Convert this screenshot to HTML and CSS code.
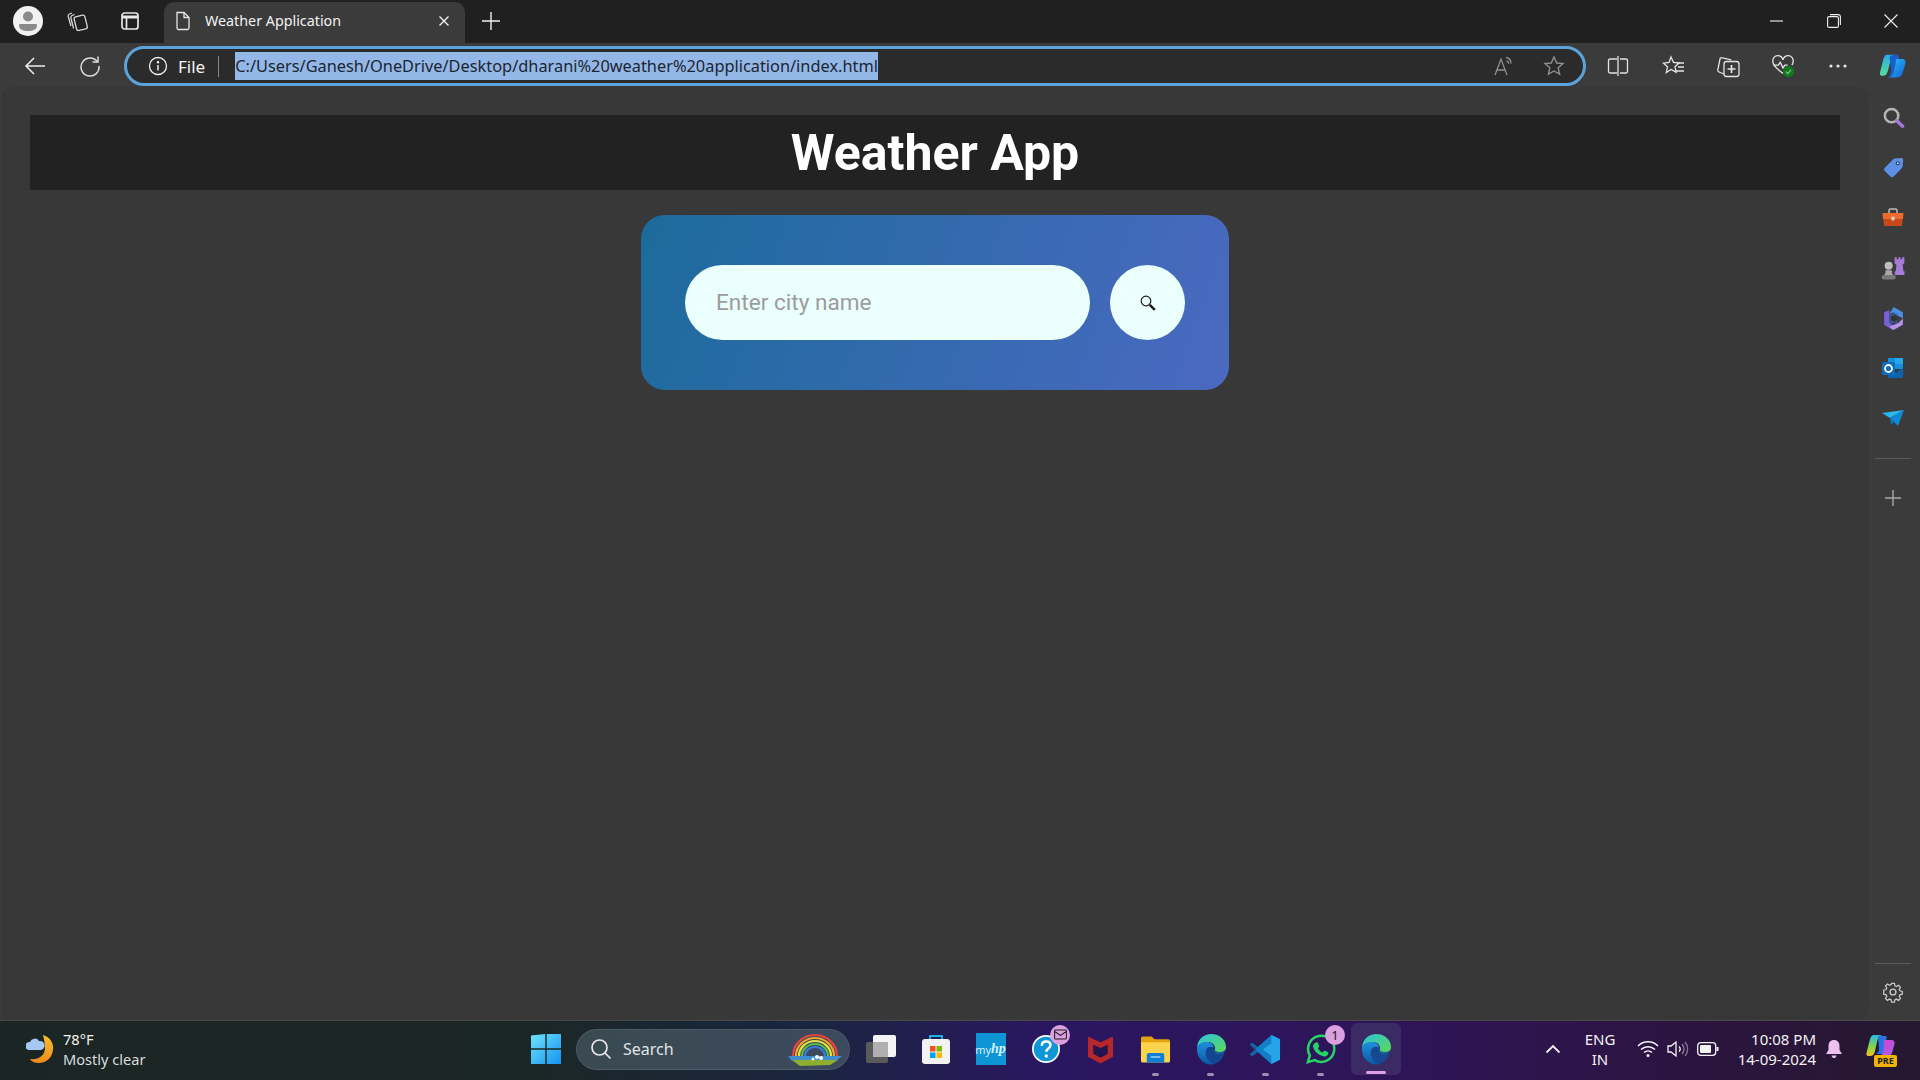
FILE: index.html
```html
<!DOCTYPE html>
<html lang="en">
<head>
  <meta charset="UTF-8" />
  <title>Weather Application</title>
  <link rel="stylesheet" href="styles.css">
</head>
<body>
  <svg class="defs" width="0" height="0">
    <defs>
      <linearGradient id="edgeA" x1="0" y1="0" x2="1" y2="1"><stop offset="0" stop-color="#2bc4e0"/><stop offset="1" stop-color="#5fd84f"/></linearGradient>
      <linearGradient id="edgeB" x1="0" y1="0" x2="0" y2="1"><stop offset="0" stop-color="#1f8fe0"/><stop offset="1" stop-color="#0c59a4"/></linearGradient>
      <linearGradient id="copilot" x1="0" y1="0" x2="1" y2="1"><stop offset="0" stop-color="#35c8e8"/><stop offset=".5" stop-color="#1a8fe8"/><stop offset="1" stop-color="#1463d8"/></linearGradient>
      <linearGradient id="copilotGreen" x1="0" y1="0" x2="0" y2="1"><stop offset="0" stop-color="#2aa8e8"/><stop offset="1" stop-color="#58dc9a"/></linearGradient>
      <linearGradient id="winLogo" x1="0" y1="0" x2="1" y2="1"><stop offset="0" stop-color="#6ee4fa"/><stop offset="1" stop-color="#1492f0"/></linearGradient>
      <linearGradient id="moon" x1="0" y1="0" x2="0" y2="1"><stop offset="0" stop-color="#fbc02d"/><stop offset="1" stop-color="#ef8a1c"/></linearGradient>
      <linearGradient id="prePink" x1="0" y1="0" x2="1" y2="1"><stop offset="0" stop-color="#e040c8"/><stop offset="1" stop-color="#a060f0"/></linearGradient>
      <linearGradient id="preGreen" x1="0" y1="0" x2="0" y2="1"><stop offset="0" stop-color="#28b8e8"/><stop offset=".6" stop-color="#8cd83c"/><stop offset="1" stop-color="#f0c020"/></linearGradient>
      <symbol id="edge" viewBox="0 0 32 32">
        <path fill="url(#edgeA)" d="M2 14C3 6 9 1 16 1c9 0 15 6 15 13 0 4-3 7-7 7-3 0-5-1-5-3 0-1 1-1 1-3 0-3-3-6-7-6-5 0-9 2-11 5z"/>
        <path fill="url(#edgeB)" d="M2 14c2-4 6-5 10-5 4 0 7 3 7 6-3-2-7-1-8 3-1 5 3 11 9 13-1 .3-3 .5-4 .5C8 31.500 1 24 2 14z"/>
        <path fill="#0f4f9a" d="M11 18c1-4 5-5 8-3 0 2 2 4 6 4 2 0 4-1 5-2-1 8-6 14-13 14-4-2-7-8-6-13z" opacity=".85"/>
      </symbol>
      <symbol id="copilotMark" viewBox="0 0 32 32">
        <path fill="url(#copilotGreen)" d="M9 3h9c-3 1-4 4-5 8l-3 11c-1 3-2 5-5 5H3c-2 0-2-2-2-3l4-16c1-3 2-5 4-5z"/>
        <path fill="#1a5fc8" d="M12 6c1-2 3-3 5-3h3c2 0 3 2 3 4l-6 19c-1 2-2 3-4 3h-3c3-2 3-4 4-8z"/>
        <path fill="url(#copilot)" d="M20 8h7c3 0 4 3 3 6l-3 10c-1 3-3 5-6 5h-9c3-1 4-3 5-7l2-9c0-2 .5-4 1-5z"/>
      </symbol>
    </defs>
  </svg>

  <div class="tabstrip">
    <div class="tabstrip-left">
      <div class="avatar">
        <svg viewBox="0 0 30 30" width="30" height="30"><circle cx="15" cy="15" r="15" fill="#f2f2f2"/><circle cx="15" cy="10.500" r="5" fill="#8a8a8a"/><path fill="#8a8a8a" d="M7 18h16c1 0 1 1 1 2 0 3-4 5-9 5s-9-2-9-5c0-1 0-2 1-2z"/></svg>
      </div>
      <span class="strip-btn">
        <svg viewBox="0 0 24 24" width="24" height="24" fill="none" stroke="#d8d8d8" stroke-width="1.300"><rect x="10" y="7" width="11" height="14" rx="2" transform="rotate(-14 15 13)"/><path d="M9.500 5.500 7 6.500c-1 .5-1.400 1.300-1.100 2.500l2.700 10.500"/><path d="M7 4 4.500 5C3.300 5.500 3 6.500 3.200 7.500L6 17"/></svg>
      </span>
      <span class="strip-btn tabs-btn">
        <svg viewBox="0 0 20 20" width="20" height="20" fill="none" stroke="#e8e8e8" stroke-width="1.700"><rect x="2" y="2" width="16" height="16" rx="2.500"/><path d="M2 6h16" stroke-width="3"/><path d="M6.500 6v12"/></svg>
      </span>
    </div>
    <div class="tab">
      <svg viewBox="0 0 18 22" width="18" height="22" fill="none" stroke="#e6e6e6" stroke-width="1.300"><path d="M3 2.500h7l5 5V18a1.500 1.500 0 0 1-1.500 1.500h-9A1.500 1.500 0 0 1 3 18z"/><path d="M10 2.500V7.500h5"/></svg>
      <span class="tab-title">Weather Application</span>
      <svg class="tab-close" viewBox="0 0 12 12" width="12" height="12" stroke="#f0f0f0" stroke-width="1.400"><path d="M1.500 1.500l9 9M10.500 1.500l-9 9"/></svg>
    </div>
    <span class="new-tab">
      <svg viewBox="0 0 18 18" width="18" height="18" stroke="#f0f0f0" stroke-width="1.400"><path d="M9 0v18M0 9h18"/></svg>
    </span>
    <div class="window-controls">
      <span class="win-btn"><svg viewBox="0 0 14 14" width="14" height="14" stroke="#f0f0f0" stroke-width="1.100"><path d="M0 7h13"/></svg></span>
      <span class="win-btn"><svg viewBox="0 0 14 14" width="14" height="14" fill="none" stroke="#f0f0f0" stroke-width="1.100"><rect x=".6" y="2.600" width="10.800" height="10.800" rx="1.500"/><path d="M3 .6h8.500A2 2 0 0 1 13.400 2.500V11"/></svg></span>
      <span class="win-btn"><svg viewBox="0 0 14 14" width="14" height="14" stroke="#f0f0f0" stroke-width="1.100"><path d="M.5.500l13 13M13.500.500l-13 13"/></svg></span>
    </div>
  </div>

  <div class="toolbar">
    <span class="tool-btn back-btn"><svg viewBox="0 0 22 20" width="22" height="20" fill="none" stroke="#eee" stroke-width="1.500"><path d="M21 10H2M10 2l-8 8 8 8"/></svg></span>
    <span class="tool-btn reload-btn"><svg viewBox="0 0 22 22" width="22" height="22" fill="none" stroke="#ddd" stroke-width="1.500"><path d="M18.500 7A9 9 0 1 0 20 11"/><path d="M19 1.500V7h-5.500"/></svg></span>
    <div class="address-bar">
      <svg viewBox="0 0 20 20" width="20" height="20" fill="none" stroke="#eee" stroke-width="1.300"><circle cx="10" cy="10" r="8.500"/><path d="M10 9v5.500" stroke-width="1.500"/><circle cx="10" cy="6.200" r=".6" fill="#eee"/></svg>
      <span class="scheme">File</span>
      <span class="scheme-sep"></span>
      <span class="url">C:/Users/Ganesh/OneDrive/Desktop/dharani%20weather%20application/index.html</span>
      <span class="address-icons">
        <svg viewBox="0 0 22 22" width="22" height="22" fill="none" stroke="#8f8f8f" stroke-width="1.300"><path d="M2 20 8 4l6 16M4 15h8"/><path d="M13 2.500c3 .5 5 3 5 6M13.500 6c1.500.3 2.200 1.300 2.300 2.700"/></svg>
        <svg viewBox="0 0 22 22" width="22" height="22" fill="none" stroke="#8f8f8f" stroke-width="1.400"><path d="M11 2l2.700 6 6.300.6-4.800 4.200 1.400 6.400L11 16l-5.600 3.200 1.400-6.400L2 8.600 8.300 8z"/></svg>
      </span>
    </div>
    <div class="toolbar-icons">
      <span class="tool-icon"><svg viewBox="0 0 22 22" width="22" height="22" fill="none" stroke="#e4e4e4" stroke-width="1.300"><path d="M10 4H3a1.500 1.500 0 0 0-1.500 1.500v11A1.500 1.500 0 0 0 3 18h7M13 4h6a1.500 1.500 0 0 1 1.500 1.500v11A1.500 1.500 0 0 1 19 18h-6"/><path d="M11 1v20"/></svg></span>
      <span class="tool-icon"><svg viewBox="0 0 24 22" width="24" height="22" fill="none" stroke="#e4e4e4" stroke-width="1.300"><path d="M10 2l2.500 5.500 5.500.6-4 3.700 1.200 5.400L10 14.500l-4.700 3 1.200-5.700-4-3.600 5.500-.7z"/><path d="M16 8h7M17 12h6M15 16h8"/></svg></span>
      <span class="tool-icon"><svg viewBox="0 0 24 24" width="24" height="24" fill="none" stroke="#e4e4e4" stroke-width="1.300"><rect x="8" y="7.500" width="15" height="15" rx="2.500"/><path d="M15.500 11v8M11.500 15h8" stroke-width="1.700"/><path d="M8 20 3 18c-1-.4-1.500-1.200-1.200-2.200L4 5c.3-1 1.300-1.500 2.300-1.200l9 2"/></svg></span>
      <span class="tool-icon"><svg viewBox="0 0 26 26" width="24" height="24" fill="none" stroke="#e4e4e4" stroke-width="1.400"><path d="M13 21C5 15 2 12 2 8a5.500 5.500 0 0 1 11-1.500A5.500 5.500 0 0 1 24 8c0 1.500-.5 3-1.500 4"/><path d="M2.500 12H8l2-3 3 6 2-3h3"/><circle cx="19" cy="19" r="6" fill="#127a1c" stroke="none"/><path d="M16.300 19.200l2 2 3.400-4" stroke="#7fc987" stroke-width="1.200"/></svg></span>
      <span class="tool-icon"><svg viewBox="0 0 20 6" width="20" height="6" fill="#e8e8e8"><circle cx="3" cy="3" r="1.600"/><circle cx="10" cy="3" r="1.600"/><circle cx="17" cy="3" r="1.600"/></svg></span>
      <span class="tool-icon"><svg width="32" height="28"><use href="#copilotMark"/></svg></span>
    </div>
  </div>

  <div class="main">
    <div class="viewport">
      <header class="app-header"><h1>Weather App</h1></header>
      <div class="search-card">
        <input class="city-input" type="text" placeholder="Enter city name">
        <button class="search-btn" type="button" aria-label="Search">
          <svg viewBox="0 0 18 18" width="18" height="18" fill="none" stroke="#1c1c1c"><circle cx="7" cy="7" r="4.800" stroke-width="1.200"/><path d="M10.800 10.800l5 5" stroke-width="2.600"/></svg>
        </button>
      </div>
    </div>
    <aside class="sidebar">
      <span class="side-icon"><svg viewBox="0 1 24 24" width="23" height="23" fill="none"><circle cx="10" cy="10" r="7" stroke="#b5b5b5" stroke-width="2.600"/><path d="M15.500 15.500l6 5.500" stroke="#a678d8" stroke-width="3.600" stroke-linecap="round"/></svg></span>
      <span class="side-icon"><svg viewBox="0 0 24 24" width="24" height="24"><path fill="#5d8fe6" d="M12 3.500c.6-.6 1.200-.9 2-.9l6.500-.6c1 0 1.800.8 1.700 1.800l-.6 6.700c-.1.800-.4 1.400-1 2l-8 8c-1 1-2.300 1-3.200 0l-5.600-5.500c-1-1-1-2.300 0-3.200z"/><circle cx="16.800" cy="7.200" r="2" fill="#1f3763"/><circle cx="16.800" cy="7.200" r="1" fill="#cfe0ff"/></svg></span>
      <span class="side-icon"><svg viewBox="0 0 24 24" width="24" height="24"><path fill="none" stroke="#bdbdbd" stroke-width="1.500" d="M8 7V4.500C8 3.500 8.500 3 9.500 3h5c1 0 1.500.5 1.500 1.500V7"/><path fill="#ec6a2c" d="M2.500 7h19c.6 0 1 .4 1 1l-.6 5H2.100l-.6-5c0-.6.4-1 1-1z"/><path fill="#c9481a" d="M2.300 13h19.400l-.7 6c-.1.600-.5 1-1.100 1H4c-.6 0-1-.4-1.100-1z"/><rect x="10.300" y="10.500" width="3.400" height="4" rx="1" fill="#d8c8b8"/></svg></span>
      <span class="side-icon"><svg viewBox="0 0 24 24" width="26" height="26"><path fill="#a77bd8" d="M14.500 3h2v2h1.500V3h2v2h1.500V3h2v5.500l-1.500 1.500.6 6h1v3.500h-9V16h1l.6-6-1.700-1.500z" transform="translate(-1 -1)"/><circle cx="8" cy="10" r="3.700" fill="#bdbdbd"/><path fill="#a8a8a8" d="M5 14h6v2.500l1 2H4l1-2z"/><rect x="1.500" y="18.500" width="13" height="4" rx="2" fill="#7a7a7a"/></svg></span>
      <span class="side-icon"><svg viewBox="0 0 24 24" width="25" height="25"><path fill="#4a8fe0" d="M12 1l9 5v6l-5-3-4-3-4 2z"/><path fill="#7a5fd8" d="M3 6l5-2 0 12 4 3-1 4-8-5z"/><path fill="#b794e8" d="M21 12v6l-9 5-4-3 9-4z"/><path fill="#3a6fd0" d="M8 8l8-2v10l-8 1z" opacity=".55"/><path fill="#343434" d="M9.500 10l4-1.500 2.500 2v3l-3.500 1.500-3-1.500z"/></svg></span>
      <span class="side-icon"><svg viewBox="0 0 24 24" width="24" height="24"><path fill="#1490df" d="M7 2h14c.6 0 1 .4 1 1v10H7z"/><path fill="#28a8ea" d="M14 2h7c.6 0 1 .4 1 1v5h-8z"/><path fill="#0a64ad" d="M7 12l8 5 7-5v9c0 .6-.4 1-1 1H8c-.6 0-1-.4-1-1z"/><rect x="1" y="6" width="13" height="13" rx="1.500" fill="#0f6cbd"/><circle cx="7.500" cy="12.500" r="3.500" fill="none" stroke="#fff" stroke-width="1.800"/></svg></span>
      <span class="side-icon"><svg viewBox="0 0 24 24" width="24" height="24"><path fill="#2bb6ee" d="M1 7l22-3-14 8z"/><path fill="#0f8ad8" d="M9 12L23 4l-6 16z"/><path fill="#1070b8" d="M9 12l1 7 3-3z"/></svg></span>
      <span class="side-sep"></span>
      <span class="side-icon"><svg viewBox="0 0 16 16" width="16" height="16" stroke="#a9a9a9" stroke-width="1.400"><path d="M8 0v16M0 8h16"/></svg></span>
      <span class="side-spacer"></span>
      <span class="side-sep side-sep-last"></span>
      <span class="side-icon"><svg viewBox="0 0 24 24" width="22" height="22" fill="none" stroke="#c9c9c9" stroke-width="1.500"><circle cx="12" cy="12" r="3.200"/><path d="M10.300 2.500h3.400l.6 2.800 1.800.8 2.500-1.500 2.300 2.400-1.500 2.400.8 1.800 2.800.7v3.300l-2.800.7-.8 1.800 1.500 2.400-2.300 2.400-2.500-1.500-1.800.8-.6 2.800h-3.400l-.6-2.800-1.800-.8-2.500 1.500-2.300-2.400 1.500-2.400-.8-1.800-2.800-.7V10.400l2.800-.7.800-1.800-1.500-2.400 2.300-2.400 2.500 1.500 1.800-.8z" transform="translate(12 12) scale(.92) translate(-12 -12.600)"/></svg></span>
    </aside>
  </div>

  <footer class="taskbar">
    <div class="weather">
      <svg viewBox="0 0 30 32" width="30" height="32"><path fill="url(#moon)" d="M17 2c7 2 11 8 10 15-1 8-7 13-14 13-4 0-7-1-9-4 8 1 15-3 15-11 0-5-1-9-2-13z"/><path fill="#a8c8f4" d="M3 17a4 4 0 0 1 1-8 5 5 0 0 1 9-1 4.500 4.500 0 0 1 2 9z"/></svg>
      <div class="weather-text">
        <span class="temp">78°F</span>
        <span class="cond">Mostly clear</span>
      </div>
    </div>
    <span class="task-item">
      <svg viewBox="0 0 30 30" width="30" height="30"><path fill="url(#winLogo)" d="M0 1.500 14.300 0v14.300H0zM15.700 0H30v14.300H15.700zM0 15.700h14.300V30H0zM15.700 15.700H30V30H15.700z"/></svg>
    </span>
    <div class="search-pill">
      <svg viewBox="0 0 22 22" width="22" height="22" fill="none" stroke="#e8e8e8" stroke-width="1.700"><circle cx="9.500" cy="9.500" r="7.500"/><path d="M15 15l5.500 5.500"/></svg>
      <span class="pill-label">Search</span>
      <svg class="rainbow" viewBox="0 0 56 34" width="56" height="34" fill="none" stroke-width="2.200"><path stroke="#e8433c" d="M6 24a22 21 0 0 1 44 0"/><path stroke="#f2a72e" d="M9 24a19 18 0 0 1 38 0"/><path stroke="#e8e040" d="M12 24a16 15 0 0 1 32 0"/><path stroke="#4fc04f" d="M15 24a13 12 0 0 1 26 0"/><path stroke="#3a78e0" d="M18 24a10 9 0 0 1 20 0"/><path fill="#3f8fd0" stroke="none" d="M1 24h54l-6 5H5z"/><path fill="#8dae2e" stroke="none" d="M5 28h46l-8 5-30 1z"/><circle cx="30" cy="25" r="2" fill="#fff" stroke="none"/><circle cx="34" cy="26" r="2" fill="#fff" stroke="none"/><circle cx="26" cy="27" r="1.500" fill="#fff" stroke="none"/></svg>
    </div>
    <div class="task-icons">
      <span class="task-item"><svg viewBox="0 0 32 32" width="32" height="32"><rect x="1" y="9" width="22" height="21" rx="2" fill="#5a5a5a"/><rect x="8" y="2" width="23" height="22" rx="2" fill="#f4f4f4"/><rect x="8" y="9" width="15" height="15" fill="#b0b0b0"/></svg></span>
      <span class="task-item"><svg viewBox="0 0 32 32" width="32" height="32"><path fill="none" stroke="#19b4e8" stroke-width="1.800" d="M10 7V3h12v4"/><rect x="2" y="6" width="28" height="25" rx="3" fill="#f2f2f2"/><rect x="10" y="13" width="5.500" height="5.500" fill="#f25022"/><rect x="16.500" y="13" width="5.500" height="5.500" fill="#7fba00"/><rect x="10" y="19.500" width="5.500" height="5.500" fill="#00a4ef"/><rect x="16.500" y="19.500" width="5.500" height="5.500" fill="#ffb900"/></svg></span>
      <span class="task-item"><span class="myhp">my<em>hp</em></span></span>
      <span class="task-item"><svg viewBox="0 0 32 32" width="30" height="30" fill="none"><circle cx="16" cy="16" r="14" fill="#0f96d8" stroke="#fff" stroke-width="1.800"/><path d="M11.500 12.500c0-3 2-4.500 4.700-4.500 2.800 0 4.600 1.500 4.600 4 0 3.500-4.500 3.500-4.500 7" stroke="#fff" stroke-width="2.600"/><circle cx="16.300" cy="23.500" r="1.800" fill="#fff"/></svg><span class="badge"><svg viewBox="0 0 14 12" width="13" height="11" fill="none" stroke="#1c1c1c" stroke-width="1.100"><rect x=".6" y="1" width="12.800" height="10" rx="1"/><path d="M1 3l6 4 6-4"/></svg></span></span>
      <span class="task-item"><svg viewBox="0 0 28 32" width="27" height="32"><path fill="#b5272a" d="M1 3l13 6 13-6v21l-13 7-13-7z"/><path fill="#241550" d="M6.500 11.500 14 15l7.500-3.500v9.500L14 25l-7.500-4z"/></svg></span>
      <span class="task-item running"><svg viewBox="0 0 32 28" width="31" height="28"><path fill="#e3a20e" d="M1 3c0-1 .7-2 2-2h9l3 3h14c1.300 0 2 1 2 2v3H1z"/><path fill="#fbd34d" d="M1 7h30v19c0 1-.7 2-2 2H3c-1.300 0-2-1-2-2z"/><path fill="#0f7fd6" d="M7 20c0-1 1-2 2-2h14c1 0 2 1 2 2v8H7z"/><rect x="11" y="21.500" width="10" height="1.500" fill="#9ed4f7"/></svg></span>
      <span class="task-item running"><svg width="32" height="32"><use href="#edge"/></svg></span>
      <span class="task-item running"><svg viewBox="0 0 32 32" width="31" height="31"><path fill="#0f7fc6" d="M22 1l9 4.500v21L22 31 8 18.500 2 23l-2-2 6-5-6-5 2-2 6 4.500z"/><path fill="#27a3ea" d="M22 1l9 4.500v21L22 31zM22 9.500L13 16l9 6.500z"/><path fill="#14639c" d="M0 11l2-2 6 4.500-3 2.500zM0 21l2 2 6-4.500-3-2.500z"/></svg></span>
      <span class="task-item running"><svg viewBox="0 0 32 32" width="31" height="31" fill="none"><path stroke="#25d366" stroke-width="2.600" d="M3 29l2-7A13.500 13.500 0 1 1 10 27z"/><path fill="#25d366" d="M11 9c1-.7 2-.5 2.400.3l1.200 2.700c.2.500 0 1-.3 1.400l-1 1.200c1 2 2.700 3.500 4.700 4.500l1.300-1.400c.4-.4.900-.5 1.400-.3l2.700 1.300c.7.400.9 1.200.4 2.100-1 2-3.500 3-6 2-5-2-8-5-9.500-9.500C8 11.500 9 10 11 9z"/></svg><span class="badge">1</span></span>
      <span class="task-item active"><svg width="32" height="32"><use href="#edge"/></svg></span>
    </div>
    <div class="tray">
      <svg class="chevron" viewBox="0 0 16 10" width="16" height="10" fill="none" stroke="#f0f0f0" stroke-width="1.800"><path d="M1.500 8.500 8 2l6.500 6.500"/></svg>
      <div class="lang"><span>ENG</span><span>IN</span></div>
      <div class="tray-icons">
        <svg viewBox="0 0 22 18" width="22" height="18" fill="none" stroke="#f4f4f4" stroke-width="1.500"><path d="M1 6a14 14 0 0 1 20 0M4 9.500a10 10 0 0 1 14 0M7 12.500a6 6 0 0 1 8 0"/><circle cx="11" cy="15.500" r="1.500" fill="#f4f4f4" stroke="none"/></svg>
        <svg viewBox="0 0 22 20" width="22" height="20" fill="none" stroke="#f4f4f4" stroke-width="1.300"><path d="M1 7v6h3l5 4V3L4 7z"/><path d="M12 7.500c1.500 1.500 1.500 3.500 0 5"/><path d="M15 5c2.500 3 2.500 7 0 10M18 3c3.500 4 3.500 10 0 14" stroke="#8a7a96"/></svg>
        <svg viewBox="0 0 22 14" width="22" height="14" fill="none" stroke="#f4f4f4" stroke-width="1.300"><rect x=".7" y=".7" width="18" height="12.600" rx="3"/><rect x="3" y="3" width="11" height="8" rx="1" fill="#f4f4f4" stroke="none"/><path d="M20.500 5v4" stroke-width="2"/></svg>
      </div>
      <div class="clock"><span>10:08 PM</span><span>14-09-2024</span></div>
      <svg class="bell" viewBox="0 0 18 20" width="18" height="20" fill="#eec0ee"><path d="M9 1c3.500 0 5.500 2.500 5.500 6v4l2.500 4H1l2.500-4V7C3.500 3.500 5.500 1 9 1z"/><path d="M6.500 16.500h5C11 18.500 10 19 9 19s-2-.5-2.500-2.500z"/></svg>
      <div class="copilot-pre">
        <svg viewBox="0 0 30 24" width="30" height="24"><path fill="url(#preGreen)" d="M8 1h8c-3 1-4 3-5 7L9 17c-.5 3-2 5-5 5H2c-1 0-2-1-1.500-3L4 5c.5-2 2-4 4-4z"/><path fill="#2874e0" d="M12 2h7c2 0 2 2 1.500 3L17 20h-7c2-1 3-3 3-5z"/><path fill="url(#prePink)" d="M18 6h7c3 0 4 2 3.500 4L26 19c-.5 2-2 3-4 3h-8c2-1 3-3 3.500-6z"/></svg>
        <span class="pre-tag">PRE</span>
      </div>
    </div>
  </footer>
</body>
</html>
```

FILE: styles.css
```css
* {
  box-sizing: border-box;
}

body {
  margin: 0;
  width: 1920px;
  height: 1080px;
  overflow: hidden;
  display: flex;
  flex-direction: column;
  background-color: #3b3b3b;
  font-family: "Noto Sans", sans-serif;
  color: #f2f2f2;
}

.defs {
  position: absolute;
}

/* barra de pestañas */
.tabstrip {
  height: 43px;
  flex-shrink: 0;
  display: flex;
  align-items: flex-start;
  background-color: #202020;
}

.tabstrip-left {
  width: 164px;
  height: 42px;
  display: flex;
  align-items: center;
  padding-left: 13px;
}

.avatar {
  width: 30px;
  height: 30px;
  flex-shrink: 0;
}

.avatar svg,
.strip-btn svg,
.tool-btn svg,
.tool-icon svg {
  display: block;
}

.strip-btn {
  width: 24px;
  margin-left: 22px;
}

.tabs-btn {
  margin-left: 31px;
  width: 20px;
}

.tab {
  width: 301px;
  height: 41px;
  margin-top: 2px;
  display: flex;
  align-items: center;
  padding: 0 0 4px 10px;
  background-color: #3b3b3b;
  border-radius: 10px 10px 0 0;
}

.tab-title {
  margin-left: 13px;
  width: 233px;
  font-size: 14.300px;
}

.new-tab {
  height: 42px;
  margin-left: 17px;
  display: flex;
  align-items: center;
}

.window-controls {
  margin-left: auto;
  height: 42px;
  display: flex;
  align-items: center;
  padding-right: 22px;
  gap: 43px;
}

.win-btn {
  display: flex;
}

/* barra de herramientas */
.toolbar {
  height: 46px;
  flex-shrink: 0;
  display: flex;
  align-items: center;
  background-color: #3b3b3b;
  padding-left: 24px;
}

.tool-btn {
  width: 22px;
}

.back-btn {
  margin-right: 33px;
}

.reload-btn {
  margin-right: 23px;
}

.address-bar {
  width: 1464px;
  height: 40px;
  display: flex;
  align-items: center;
  padding-left: 21px;
  padding-right: 18px;
  background-color: #2b2b2b;
  border: 3px solid #5ba3d8;
  border-radius: 20px;
}

.scheme {
  margin-left: 10px;
  font-size: 17px;
  color: #f4f4f4;
}

.scheme-sep {
  width: 1px;
  height: 21px;
  margin-left: 13px;
  background-color: #8a8a8a;
}

.url {
  margin-left: 16px;
  height: 28px;
  line-height: 28px;
  white-space: nowrap;
  font-size: 16.350px;
  color: #1d2530;
  background-color: #93b8e8;
}

.address-icons {
  margin-left: auto;
  display: flex;
  gap: 28px;
}

.toolbar-icons {
  display: flex;
  align-items: center;
  margin-left: 4px;
}

.tool-icon {
  width: 55px;
  display: flex;
  justify-content: center;
}

/* contenido */
.main {
  flex: 1;
  min-height: 0;
  display: flex;
}

.viewport {
  flex: 1;
  margin-left: 4px;
  padding: 26px 26px 0;
  background-color: #383838;
  border-radius: 8px 8px 8px 0;
  box-shadow: 0 0 3px #2e2e2e;
}

.app-header {
  height: 75px;
  display: flex;
  align-items: center;
  justify-content: center;
  background-color: #222222;
}

.app-header h1 {
  margin: 0;
  font-family: Roboto, sans-serif;
  font-size: 50px;
  font-weight: 700;
  color: #ffffff;
}

.search-card {
  width: 588px;
  height: 175px;
  margin: 25px auto 0;
  display: flex;
  align-items: center;
  gap: 20px;
  padding: 0 44px;
  border-radius: 24px;
  background: linear-gradient(110deg, #1c6b9c, #4b69c1);
}

.city-input {
  width: 405px;
  height: 75px;
  padding: 0 31px;
  border: none;
  border-radius: 38px;
  background-color: #ebfffc;
  font-family: Roboto, sans-serif;
  font-size: 22.600px;
}

.city-input::placeholder {
  color: #9c9c9c;
}

.search-btn {
  width: 75px;
  height: 75px;
  flex-shrink: 0;
  display: flex;
  align-items: center;
  justify-content: center;
  padding: 0;
  border: none;
  border-radius: 50%;
  background-color: #ebfffc;
}

/* barra lateral */
.sidebar {
  width: 54px;
  display: flex;
  flex-direction: column;
  align-items: center;
  padding-top: 4px;
}

.side-icon {
  height: 50px;
  flex-shrink: 0;
  display: flex;
  align-items: center;
  justify-content: center;
}

.side-sep {
  width: 36px;
  height: 1px;
  flex-shrink: 0;
  margin: 15px 0 14px;
  background-color: #5a5a5a;
}

.side-sep-last {
  margin: 0 0 3px;
}

.side-spacer {
  flex: 1;
}

/* barra de tareas */
.taskbar {
  height: 60px;
  flex-shrink: 0;
  margin-top: 3px;
  display: flex;
  align-items: center;
  padding-bottom: 3px;
  border-top: 1px solid #4a4a4a;
  background: linear-gradient(90deg, #1b2524 0%, #1b2726 28%, #1a2540 42%, #2a1660 55%, #2e1558 72%, #2c1440 88%, #24182e 100%);
}

.weather {
  width: 518px;
  display: flex;
  align-items: center;
  gap: 7px;
  padding-left: 26px;
}

.weather-text {
  display: flex;
  flex-direction: column;
  line-height: 20px;
  font-size: 14.600px;
}

.cond {
  color: #d8dcdc;
}

.task-item {
  position: relative;
  width: 55px;
  height: 55px;
  flex-shrink: 0;
  display: flex;
  align-items: center;
  justify-content: center;
}

.search-pill {
  width: 274px;
  height: 41px;
  flex-shrink: 0;
  margin: 0 3px;
  display: flex;
  align-items: center;
  padding-left: 13px;
  border: 1px solid #4e5c68;
  border-radius: 21px;
  background: linear-gradient(90deg, #3a4a50, #3c4a5e);
}

.pill-label {
  margin-left: 11px;
  font-size: 16px;
  color: #dfe4e6;
}

.rainbow {
  margin-left: auto;
  margin-right: 6px;
}

.task-icons {
  display: flex;
  align-items: center;
}

.myhp {
  width: 30px;
  height: 32px;
  display: flex;
  align-items: center;
  justify-content: center;
  background-color: #0d95d6;
  font-size: 11px;
  color: #d8f0fb;
}

.myhp em {
  font-family: "Liberation Serif", serif;
  font-size: 14px;
  font-weight: 700;
}

.badge {
  position: absolute;
  top: 3px;
  right: 3px;
  width: 20px;
  height: 20px;
  display: flex;
  align-items: center;
  justify-content: center;
  border-radius: 50%;
  background-color: #dca0e0;
  font-size: 13px;
  color: #1c1c1c;
}

.running::after,
.active::after {
  content: "";
  position: absolute;
  bottom: 1px;
  left: 24px;
  width: 7px;
  height: 3px;
  border-radius: 2px;
  background-color: #9d8fb0;
}

.active {
  width: 50px;
  height: 52px;
  margin-left: 3px;
  border-radius: 6px;
  background-color: #3b2a63;
}

.active::after {
  left: 15px;
  width: 20px;
  background-color: #dca0e0;
}

.tray {
  margin-left: auto;
  display: flex;
  align-items: center;
  padding-right: 24px;
}

.lang {
  width: 60px;
  margin-left: 9px;
  display: flex;
  flex-direction: column;
  align-items: center;
  line-height: 20px;
  font-size: 15px;
}

.tray-icons {
  margin-left: 7px;
  display: flex;
  align-items: center;
  gap: 8px;
}

.clock {
  width: 96px;
  margin-left: 1px;
  display: flex;
  flex-direction: column;
  align-items: flex-end;
  white-space: nowrap;
  line-height: 20px;
  font-size: 15px;
}

.bell {
  margin-left: 9px;
}

.copilot-pre {
  position: relative;
  width: 30px;
  height: 30px;
  margin-left: 23px;
}

.pre-tag {
  position: absolute;
  right: -1px;
  bottom: -3px;
  width: 23px;
  height: 12px;
  border-radius: 2px;
  background-color: #f0b400;
  text-align: center;
  line-height: 12px;
  font-size: 9px;
  font-weight: 700;
  color: #1c1c1c;
}
```
